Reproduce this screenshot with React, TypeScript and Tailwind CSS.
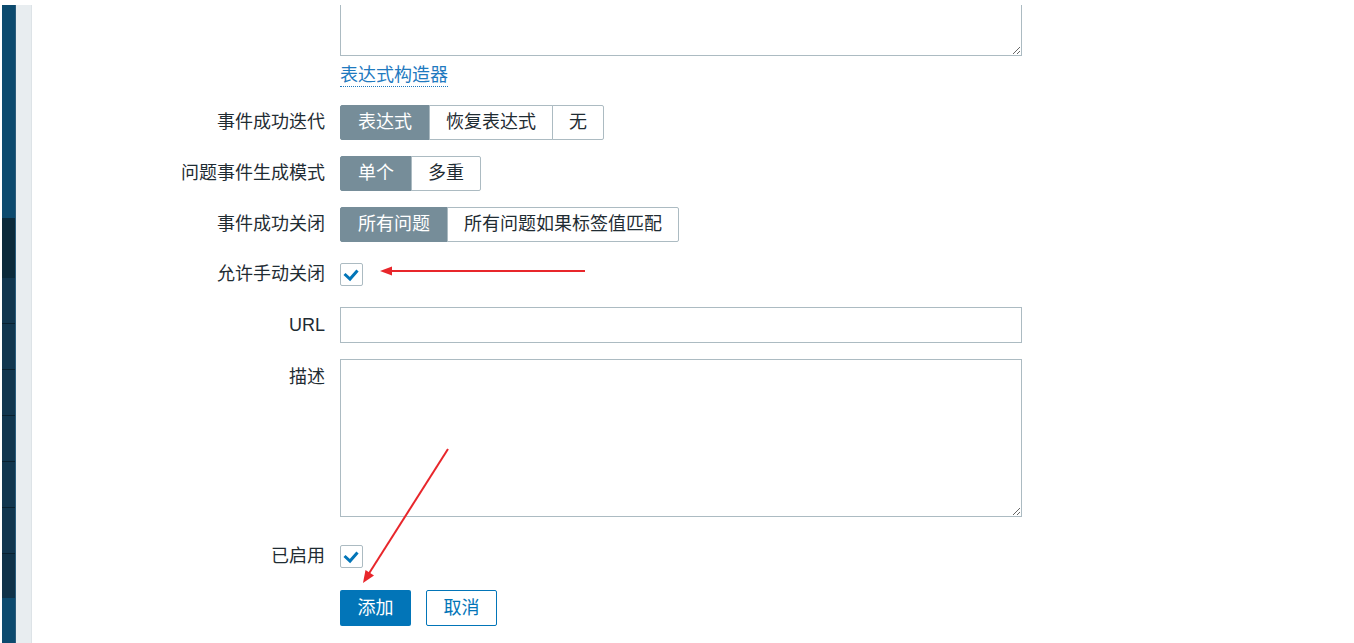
import React from 'react'

const font = { fontFamily: '"Liberation Sans", "Noto Sans CJK SC", sans-serif' }

function Label({ children, top }: { children: React.ReactNode; top?: boolean }) {
  return (
    <div className={`w-[293px] shrink-0 text-right text-[18px] text-[#1f2c33] ${top ? 'leading-[36px]' : ''}`}>
      {children}
    </div>
  )
}

function Segmented({ items }: { items: string[] }) {
  return (
    <div className="flex h-[35px]">
      {items.map((item, i) => (
        <div
          key={item}
          className={`flex items-center text-[18px] border ${i > 0 ? '-ml-px px-4' : 'px-[17px]'} ${
            i === 0
              ? 'bg-[#768d99] border-[#768d99] text-white rounded-l-[2px]'
              : 'bg-white border-[#acbbc2] text-[#1f2c33]'
          } ${i === items.length - 1 ? 'rounded-r-[2px]' : ''}`}
        >
          {item}
        </div>
      ))}
    </div>
  )
}

function Checkbox() {
  return (
    <div className="w-[23px] h-[23px] border border-[#acbbc2] rounded-[2px] bg-white">
      <svg width="21" height="21" viewBox="0 0 21 21">
        <path d="M3.5 10 L9 15 L16.5 6.5" fill="none" stroke="#0275b8" strokeWidth="3" />
      </svg>
    </div>
  )
}

const sideSegments = [
  { h: 'h-[45px]', line: false },
  { h: 'h-[46px]', line: true },
  { h: 'h-[46px]', line: true },
  { h: 'h-[46px]', line: true },
  { h: 'h-[46px]', line: true },
  { h: 'h-[46px]', line: true },
  { h: 'h-[45px]', line: true },
]

export default function App() {
  return (
    <div className="h-[643px] w-[1354px] overflow-hidden bg-white pt-[5px] relative" style={font}>
      <div className="flex h-full">
        {/* Sidebar */}
        <div className="w-[2px] shrink-0 bg-white" />
        <div className="w-[14px] shrink-0 flex flex-col border-r border-[#2b5d7d]">
          <div className="h-[213px] bg-[#0c4a6e]" />
          <div className="h-[60px] bg-[#0b2a3b]" />
          {sideSegments.map((s, i) => (
            <div
              key={i}
              className={`${s.h} ${i === 6 ? 'bg-[#0f3249]' : 'bg-[#11364f]'} ${s.line ? 'border-t border-[#09202f]' : ''}`}
            />
          ))}
          <div className="flex-1 bg-[#0c4a6e]" />
        </div>
        <div className="w-[16px] shrink-0 bg-[#e8edf0] border-r border-[#dde3e7]" />

        {/* Form */}
        <div className="flex-1 flex flex-col overflow-hidden">
          <div className="flex -mt-[20px]">
            <Label>{''}</Label>
            <textarea
              className="ml-[15px] w-[682px] h-[71px] border border-[#acbbc2] bg-white outline-none"
              defaultValue=""
            />
          </div>
          <div className="flex mt-[8px]">
            <Label>{''}</Label>
            <div className="ml-[15px]">
              <span className="inline-block text-[18px] leading-[22px] text-[#1f7abf] border-b border-dotted border-[#1f7abf]">
                表达式构造器
              </span>
            </div>
          </div>

          <div className="flex items-center mt-[17px]">
            <Label>事件成功迭代</Label>
            <div className="ml-[15px]">
              <Segmented items={['表达式', '恢复表达式', '无']} />
            </div>
          </div>
          <div className="flex items-center mt-[16px]">
            <Label>问题事件生成模式</Label>
            <div className="ml-[15px]">
              <Segmented items={['单个', '多重']} />
            </div>
          </div>
          <div className="flex items-center mt-[16px]">
            <Label>事件成功关闭</Label>
            <div className="ml-[15px]">
              <Segmented items={['所有问题', '所有问题如果标签值匹配']} />
            </div>
          </div>

          <div className="flex items-center h-[35px] mt-[15px]">
            <Label>允许手动关闭</Label>
            <div className="ml-[15px]">
              <Checkbox />
            </div>
          </div>

          <div className="flex items-center mt-[15px]">
            <Label>URL</Label>
            <input
              className="ml-[15px] w-[682px] h-[36px] border border-[#acbbc2] bg-white outline-none px-2"
              defaultValue=""
            />
          </div>

          <div className="flex items-start mt-[16px]">
            <Label top>描述</Label>
            <textarea
              className="ml-[15px] w-[682px] h-[158px] border border-[#acbbc2] bg-white outline-none"
              defaultValue=""
            />
          </div>

          <div className="flex items-center h-[35px] mt-[22px]">
            <Label>已启用</Label>
            <div className="ml-[15px]">
              <Checkbox />
            </div>
          </div>

          <div className="flex mt-[16px]">
            <Label>{''}</Label>
            <div className="ml-[15px] flex gap-[15px]">
              <button className="w-[71px] h-[36px] rounded-[2px] bg-[#0275b8] text-white text-[18px]">添加</button>
              <button className="w-[71px] h-[36px] rounded-[2px] border border-[#0275b8] bg-white text-[#0275b8] text-[18px]">
                取消
              </button>
            </div>
          </div>
        </div>
      </div>

      {/* Annotation arrows */}
      <svg className="absolute left-0 top-0 pointer-events-none" width="1354" height="643">
        <line x1="585" y1="271" x2="388" y2="271" stroke="#e8262b" strokeWidth="2" />
        <polygon points="380,271 392,266.5 392,275.5" fill="#e8262b" />
        <line x1="448" y1="449" x2="368" y2="575" stroke="#e8262b" strokeWidth="2" />
        <polygon points="363,583 365.5,570 374,575.5" fill="#e8262b" />
      </svg>
    </div>
  )
}
